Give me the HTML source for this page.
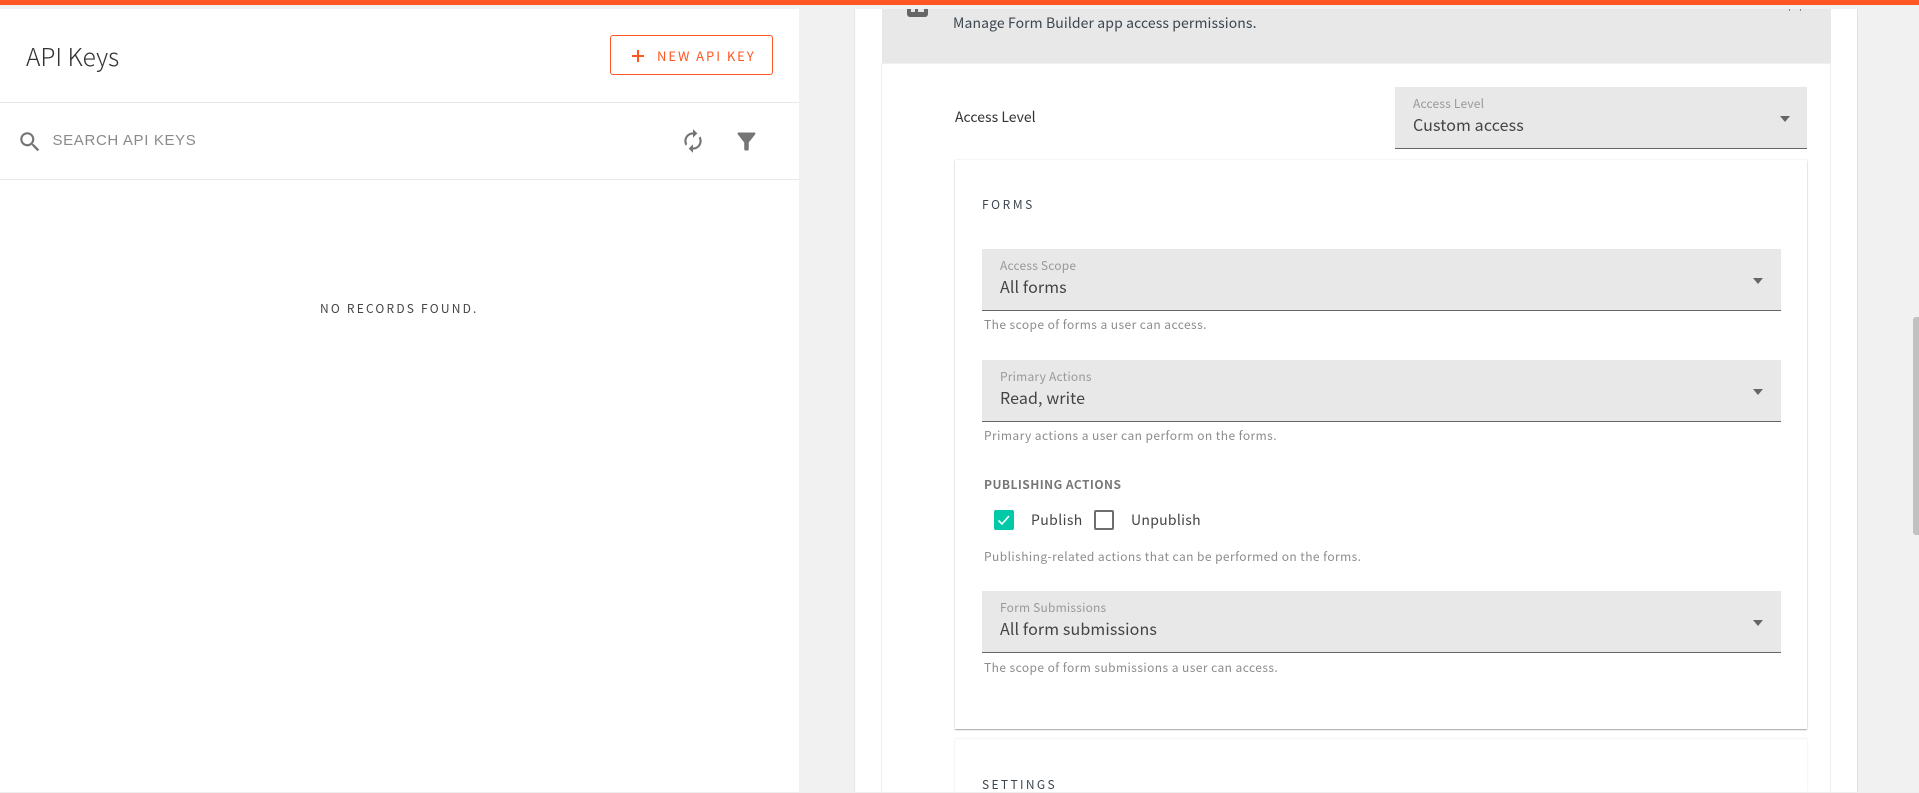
<!DOCTYPE html>
<html><head><meta charset="utf-8"><title>API Keys</title>
<style>
html,body{margin:0;padding:0;width:1919px;height:793px;overflow:hidden;background:#f1f1f1}
body{position:relative;font-family:"Liberation Sans","Noto Sans CJK JP",sans-serif}
div,svg{position:absolute}
.t{white-space:nowrap;line-height:20px;height:20px;font-family:"Noto Sans CJK JP","Liberation Sans",sans-serif}
.sel{background:#e8e8e8;border-bottom:1px solid #666;box-sizing:border-box;height:62px}
.lab{font-size:12px;color:#999;letter-spacing:.2px}
.val{font-size:16px;color:#444;letter-spacing:.13px}
.help{font-size:12px;color:#8c8c8c;letter-spacing:.43px}
.car{width:0;height:0;border-left:5.5px solid transparent;border-right:5.5px solid transparent;border-top:6px solid #666}
</style></head><body>
<div style="left:0;top:0;width:1919px;height:5px;background:#ff5722"></div>
<div style="left:0;top:9px;width:799px;height:783px;background:#fff"></div>
<div style="left:0;top:102px;width:799px;height:1px;background:#e8e8e8"></div>
<div style="left:0;top:179px;width:799px;height:1px;background:#e8e8e8"></div>
<div class="t" style="left:26px;top:47px;font-size:24.5px;font-weight:300;color:#333">API Keys</div>
<div style="left:610px;top:35px;width:163px;height:40px;box-sizing:border-box;border:1px solid #ff5722;border-radius:3px"></div>
<div style="left:632px;top:54.5px;width:12px;height:2px;background:#ff5722"></div>
<div style="left:637px;top:49.5px;width:2px;height:12px;background:#ff5722"></div>
<div class="t" style="left:657px;top:46px;font-size:13px;letter-spacing:1.95px;color:#ff5722">NEW API KEY</div>
<svg style="left:17px;top:129px" width="26" height="26" viewBox="0 0 24 24" fill="#757575"><path d="M15.5 14h-.79l-.28-.27C15.41 12.59 16 11.11 16 9.5 16 5.91 13.09 3 9.5 3S3 5.91 3 9.5 5.91 16 9.5 16c1.61 0 3.09-.59 4.23-1.57l.27.28v.79l5 4.99L20.49 19l-4.99-5zm-6 0C7.01 14 5 11.99 5 9.5S7.01 5 9.5 5 14 7.01 14 9.5 11.99 14 9.5 14z"/></svg>
<div class="t" style="left:52.5px;top:131px;font-family:'Liberation Sans',sans-serif;font-size:15px;letter-spacing:.65px;color:#8a8a8a">SEARCH API KEYS</div>
<svg style="left:680px;top:128px;transform:scaleX(-1)" width="26" height="26" viewBox="0 0 24 24" fill="#757575"><path d="M12 4V1L8 5l4 4V6c3.31 0 6 2.69 6 6 0 1.01-.25 1.97-.7 2.8l1.46 1.46C19.54 15.03 20 13.57 20 12c0-4.42-3.58-8-8-8zm0 14c-3.31 0-6-2.69-6-6 0-1.01.25-1.97.7-2.8L5.24 7.74C4.46 8.97 4 10.43 4 12c0 4.42 3.58 8 8 8v3l4-4-4-4v3z"/></svg>
<svg style="left:732.5px;top:127.5px" width="27" height="27" viewBox="0 0 24 24" fill="#757575"><path d="M4.25 5.61C6.27 8.2 10 13 10 13v6c0 .55.45 1 1 1h2c.55 0 1-.45 1-1v-6s3.72-4.8 5.74-7.39c.51-.66.04-1.61-.79-1.61H5.04c-.83 0-1.3.95-.79 1.61z"/></svg>
<div class="t" style="left:320px;top:299px;font-size:12px;letter-spacing:2.2px;color:#444">NO RECORDS FOUND.</div>

<!-- right panel -->
<div style="left:855px;top:9px;width:1002px;height:783px;background:#fff;box-shadow:-1px 0 0 #e6e6e6,1px 0 0 #e0e0e0"></div>
<div style="left:881px;top:63px;width:1px;height:729px;background:#f0f0f0"></div>
<div style="left:1830px;top:63px;width:1px;height:729px;background:#f0f0f0"></div>
<div style="left:882px;top:9px;width:949px;height:55px;background:#e8e8e8;border-bottom:1px solid #f0f0f0;box-sizing:border-box"></div>
<div style="left:907px;top:9px;width:21px;height:8px;background:#666;border-radius:0 0 3px 3px"></div>
<div style="left:911px;top:9px;width:4px;height:3px;background:#e8e8e8"></div>
<div style="left:918px;top:9px;width:6px;height:3px;background:#e8e8e8"></div>
<div style="left:1789px;top:9px;width:1px;height:2px;background:#888"></div>
<div style="left:1800px;top:9px;width:1px;height:2px;background:#888"></div>
<div class="t" style="left:953px;top:13px;font-size:14px;letter-spacing:.1px;color:#3c4650">Manage Form Builder app access permissions.</div>
<div class="t" style="left:955px;top:107px;font-size:14px;letter-spacing:.03px;color:#333">Access Level</div>
<div class="sel" style="left:1395px;top:87px;width:412px"></div>
<div class="t lab" style="left:1413px;top:94px">Access Level</div>
<div class="t val" style="left:1413px;top:114px">Custom access</div>
<div class="car" style="left:1780px;top:116px"></div>

<div style="left:955px;top:160px;width:852px;height:569px;background:#fff;box-shadow:0 1px 1px #aaa,0 0 2px rgba(0,0,0,.12)"></div>
<div class="t" style="left:982px;top:195px;font-size:12px;letter-spacing:2.6px;color:#3c4650">FORMS</div>

<div class="sel" style="left:982px;top:249px;width:799px"></div>
<div class="t lab" style="left:1000px;top:256px">Access Scope</div>
<div class="t val" style="left:1000px;top:276px">All forms</div>
<div class="car" style="left:1753px;top:278px"></div>
<div class="t help" style="left:984px;top:315px">The scope of forms a user can access.</div>

<div class="sel" style="left:982px;top:360px;width:799px"></div>
<div class="t lab" style="left:1000px;top:367px">Primary Actions</div>
<div class="t val" style="left:1000px;top:387px">Read, write</div>
<div class="car" style="left:1753px;top:389px"></div>
<div class="t help" style="left:984px;top:426px">Primary actions a user can perform on the forms.</div>

<div class="t" style="left:984px;top:475px;font-size:12px;font-weight:700;letter-spacing:.45px;color:#777">PUBLISHING ACTIONS</div>
<div style="left:994px;top:510px;width:20px;height:20px;background:#00c9a7;border-radius:2px"></div>
<svg style="left:994px;top:510px" width="20" height="20" viewBox="0 0 20 20" fill="none" stroke="#fff" stroke-width="1.6"><path d="M4.5 10.5l3.5 3.5 7-8"/></svg>
<div class="t" style="left:1031px;top:510px;font-size:14px;letter-spacing:.4px;color:#444">Publish</div>
<div style="left:1094px;top:510px;width:20px;height:20px;box-sizing:border-box;border:2px solid #6e6e6e;border-radius:2px;background:#fff"></div>
<div class="t" style="left:1131px;top:510px;font-size:14px;letter-spacing:.28px;color:#444">Unpublish</div>
<div class="t help" style="left:984px;top:547px">Publishing-related actions that can be performed on the forms.</div>

<div class="sel" style="left:982px;top:591px;width:799px"></div>
<div class="t lab" style="left:1000px;top:598px">Form Submissions</div>
<div class="t val" style="left:1000px;top:618px">All form submissions</div>
<div class="car" style="left:1753px;top:620px"></div>
<div class="t help" style="left:984px;top:658px">The scope of form submissions a user can access.</div>

<div style="left:955px;top:739px;width:852px;height:53px;background:#fff;box-shadow:0 0 2px rgba(0,0,0,.12)"></div>
<div class="t" style="left:982px;top:775px;font-size:12px;letter-spacing:2.35px;color:#3c4650">SETTINGS</div>
<div style="left:0;top:792px;width:1919px;height:1px;background:#eee"></div>
<div style="left:1913px;top:317px;width:6px;height:218px;background:#c1c1c1;border-radius:3px 0 0 3px"></div>
</body></html>
